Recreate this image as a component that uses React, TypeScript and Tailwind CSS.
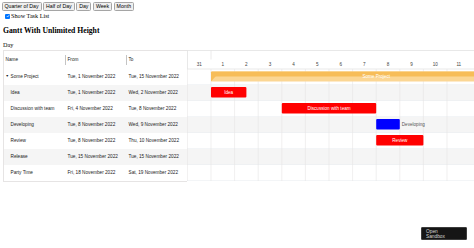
import * as React from 'react';

type Task = {
  name: string;
  from: string;
  to: string;
  project?: boolean;
};

const tasks: Task[] = [
  {name: 'Some Project', from: 'Tue, 1 November 2022', to: 'Tue, 15 November 2022', project: true},
  {name: 'Idea', from: 'Tue, 1 November 2022', to: 'Wed, 2 November 2022'},
  {name: 'Discussion with team', from: 'Fri, 4 November 2022', to: 'Tue, 8 November 2022'},
  {name: 'Developing', from: 'Tue, 8 November 2022', to: 'Wed, 9 November 2022'},
  {name: 'Review', from: 'Tue, 8 November 2022', to: 'Thu, 10 November 2022'},
  {name: 'Release', from: 'Tue, 15 November 2022', to: 'Tue, 15 November 2022'},
  {name: 'Party Time', from: 'Fri, 18 November 2022', to: 'Sat, 19 November 2022'},
];

const days = ['31', '1', '2', '3', '4', '5', '6', '7', '8', '9', '10', '11'];

const COL = 23.6;
const OFF = 0.4;
const HEADER = 19;
const ROW = 16;
const CHART_W = 287;
const sans = '"Liberation Sans", Arial, sans-serif';

const colX = (i: number) => OFF + COL * i;
const rowY = (i: number) => HEADER + ROW * i;

function ViewButtons() {
  const modes = ['Quarter of Day', 'Half of Day', 'Day', 'Week', 'Month'];
  return (
    <div className="flex gap-[1.5px] pl-[1.5px] pt-[2px]">
      {modes.map((m) => (
        <button
          key={m}
          className="h-[9px] px-[2px] border border-[#a5a5a5] rounded-[1.5px] bg-[#efefef] text-[5.2px] leading-none text-black font-['Liberation_Sans',Arial,sans-serif]"
        >
          {m}
        </button>
      ))}
    </div>
  );
}

function TaskListTable() {
  return (
    <div className="w-[184px] shrink-0 border-l border-[#e6e4e4] text-[4.7px] text-[#222] font-['Liberation_Sans',Arial,sans-serif]">
      <div className="flex h-[19px] items-center border-t border-[#e6e4e4]">
        <div className="w-[61px] pl-[1.5px]">Name</div>
        <div className="w-px h-[10px] bg-[#c4c4c4]" />
        <div className="w-[60px] pl-[1.5px]">From</div>
        <div className="w-px h-[10px] bg-[#c4c4c4]" />
        <div className="flex-1 pl-[1.5px]">To</div>
      </div>
      <div className="border-b border-[#e6e4e4]">
        {tasks.map((t, i) => (
          <div key={t.name} className={`flex h-[16px] items-center ${i % 2 === 1 ? 'bg-[#f5f5f5]' : 'bg-white'}`}>
            <div className="w-[62px] flex items-center pl-[1.5px]">
              <span className="w-[5px] text-[3.5px] leading-none">{t.project ? '▼' : ''}</span>
              <span className="whitespace-nowrap">{t.name}</span>
            </div>
            <div className="w-[61px] pl-[1.5px] whitespace-nowrap">{t.from}</div>
            <div className="flex-1 pl-[1.5px] whitespace-nowrap">{t.to}</div>
          </div>
        ))}
      </div>
    </div>
  );
}

function Bar({x, w, row, fill, label, outside}: {x: number; w: number; row: number; fill: string; label: string; outside?: boolean}) {
  const y = rowY(row) + 2;
  const h = 10.5;
  return (
    <g>
      <rect x={x} y={y} width={w} height={h} rx={1} fill={fill} />
      {outside ? (
        <text x={x + w + 2} y={y + h / 2} dominantBaseline="central" fontSize={4.6} fill="#555" fontFamily={sans}>
          {label}
        </text>
      ) : (
        <text x={x + w / 2} y={y + h / 2} dominantBaseline="central" textAnchor="middle" fontSize={4.6} fill="#fff" fontFamily={sans}>
          {label}
        </text>
      )}
    </g>
  );
}

function GanttChart() {
  const height = HEADER + ROW * tasks.length;
  const px1 = colX(1);
  const pw = COL * 14;
  const py = rowY(0) + 2.5;
  const ph = 10;
  return (
    <svg width={CHART_W} height={height} className="block shrink-0">
      {/* grid rows */}
      {tasks.map((t, i) => (
        <rect key={t.name} x={0} y={rowY(i)} width={CHART_W} height={ROW} fill={i % 2 === 1 ? '#f5f5f5' : '#ffffff'} />
      ))}
      {tasks.map((t, i) => (
        <line key={t.name + 'l'} x1={0} x2={CHART_W} y1={rowY(i + 1) - 0.5} y2={rowY(i + 1) - 0.5} stroke="#ebeff2" strokeWidth={0.6} />
      ))}
      {days.map((d, i) => (
        <line key={'t' + d} x1={colX(i)} x2={colX(i)} y1={HEADER} y2={height} stroke="#e6e4e4" strokeWidth={0.6} />
      ))}

      {/* calendar header */}
      <rect x={0.5} y={0.5} width={CHART_W} height={HEADER - 0.5} fill="#fff" stroke="#e3e3e3" strokeWidth={0.8} />
      <line x1={colX(1)} x2={colX(1)} y1={0} y2={9.5} stroke="#e6e4e4" strokeWidth={0.8} />
      {days.map((d, i) => (
        <text key={d} x={colX(i) + COL / 2} y={14} dominantBaseline="central" textAnchor="middle" fontSize={4.6} fill="#444" fontFamily={sans}>
          {d}
        </text>
      ))}

      {/* project */}
      <rect x={px1} y={py} width={pw} height={ph} rx={1} fill="#fbd694" />
      <rect x={px1} y={py} width={pw} height={ph / 2} rx={1} fill="#f7bd58" />
      <polygon points={`${px1},${py + ph / 2 - 0.5} ${px1},${py + ph} ${px1 + 5},${py + ph / 2 - 0.5}`} fill="#f7bd58" />
      <text x={px1 + pw / 2} y={py + ph / 2} dominantBaseline="central" textAnchor="middle" fontSize={4.6} fill="#fff" fontFamily={sans}>
        Some Project
      </text>

      <Bar x={colX(1)} w={COL * 1.5} row={1} fill="#ff0000" label="Idea" />
      <Bar x={colX(4)} w={COL * 4} row={2} fill="#ff0000" label="Discussion with team" />
      <Bar x={colX(8)} w={COL} row={3} fill="#0000ff" label="Developing" outside />
      <Bar x={colX(8)} w={COL * 2} row={4} fill="#ff0000" label="Review" />
    </svg>
  );
}

export default function App() {
  return (
    <div className="relative w-[474px] h-[248px] overflow-hidden bg-white text-black font-['Liberation_Serif','Times_New_Roman',serif]">
      <ViewButtons />
      <label className="flex items-center h-[8px] mt-[1px] pl-[5px] text-[6.2px] leading-none">
        <span className="w-[5px] h-[5px] mr-[1px] rounded-[1px] bg-[#0075ff] flex items-center justify-center">
          <svg viewBox="0 0 10 10" className="w-[4px] h-[4px]">
            <path d="M2 5.2 L4.2 7.4 L8 2.8" fill="none" stroke="#fff" strokeWidth={1.8} />
          </svg>
        </span>
        Show Task List
      </label>
      <h3 className="mt-[5px] pl-[3px] text-[7.7px] leading-[11px] font-bold">Gantt With Unlimited Height</h3>
      <div className="mt-[5px] pl-[3px] text-[6.2px] leading-[8px]">Day</div>
      <div className="mt-[1px] flex pl-[3px]">
        <TaskListTable />
        <GanttChart />
      </div>

      <div className="absolute left-[421px] top-[227px] w-[46px] h-[13px] bg-[#151515] border border-[#3c3c3c] rounded-[1px] pl-[4px] pt-[1px] text-[4.8px] leading-[5.3px] text-[#d8d8d8] font-['Liberation_Sans',Arial,sans-serif]">
        <div>Open</div>
        <div>Sandbox</div>
      </div>
    </div>
  );
}
